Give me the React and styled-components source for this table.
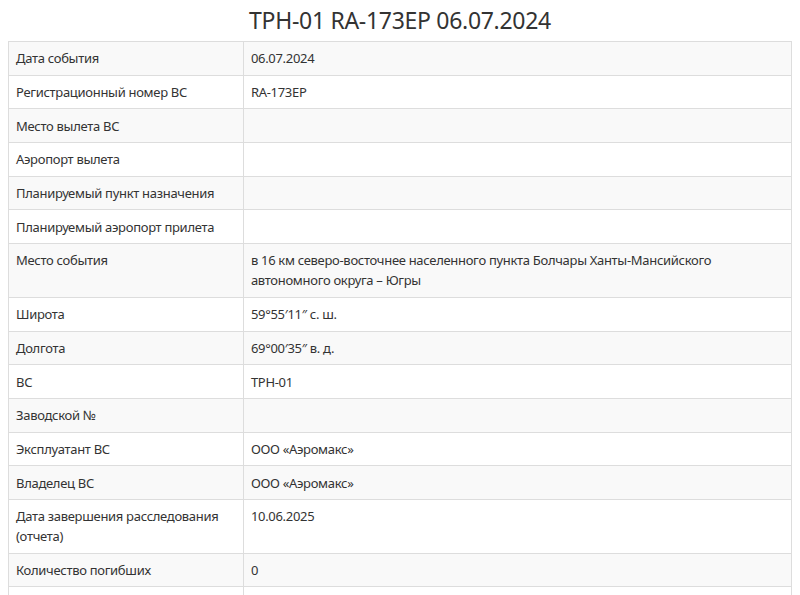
import React from "react";
import styled, { createGlobalStyle } from "styled-components";

const GlobalStyle = createGlobalStyle`
  body {
    margin: 0;
    background: #fff;
    font-family: "Noto Sans", "Open Sans", sans-serif;
    color: #333;
  }
`;

const rows = [
  ["Дата события", "06.07.2024"],
  ["Регистрационный номер ВС", "RA-173EP"],
  ["Место вылета ВС", ""],
  ["Аэропорт вылета", ""],
  ["Планируемый пункт назначения", ""],
  ["Планируемый аэропорт прилета", ""],
  [
    "Место события",
    "в 16 км северо-восточнее населенного пункта Болчары Ханты-Мансийского автономного округа – Югры",
  ],
  ["Широта", "59°55′11″ с. ш."],
  ["Долгота", "69°00′35″ в. д."],
  ["ВС", "TPH-01"],
  ["Заводской №", ""],
  ["Эксплуатант ВС", "ООО «Аэромакс»"],
  ["Владелец ВС", "ООО «Аэромакс»"],
  ["Дата завершения расследования (отчета)", "10.06.2025"],
  ["Количество погибших", "0"],
  ["", ""],
];

const Page = styled.div`
  padding: 0 8px;
`;

const Title = styled.h1`
  margin: 0;
  padding: 6px 0 7px;
  text-align: center;
  font-size: 23px;
  line-height: 28px;
  letter-spacing: -0.3px;
  font-weight: 400;
  color: #333;
`;

const Table = styled.table`
  width: 100%;
  border-collapse: collapse;
  font-size: 13px;
  line-height: 20px;
  letter-spacing: -0.3px;
  border: 1px solid #ddd;
`;

const Row = styled.tr`
  background: ${(p) => (p.$striped ? "#f9f9f9" : "#fff")};
`;

const Cell = styled.td`
  border: 1px solid #ddd;
  padding: 6.35px 7px;
  height: 20px;
  vertical-align: top;
  width: ${(p) => p.$w || "auto"};
`;

export default function App() {
  return (
    <Page>
      <GlobalStyle />
      <Title>TPH-01 RA-173EP 06.07.2024</Title>
      <Table>
        <tbody>
          {rows.map(([k, v], i) => (
            <Row key={i} $striped={i % 2 === 0}>
              <Cell $w="30%">{k}</Cell>
              <Cell>{v}</Cell>
            </Row>
          ))}
        </tbody>
      </Table>
    </Page>
  );
}
